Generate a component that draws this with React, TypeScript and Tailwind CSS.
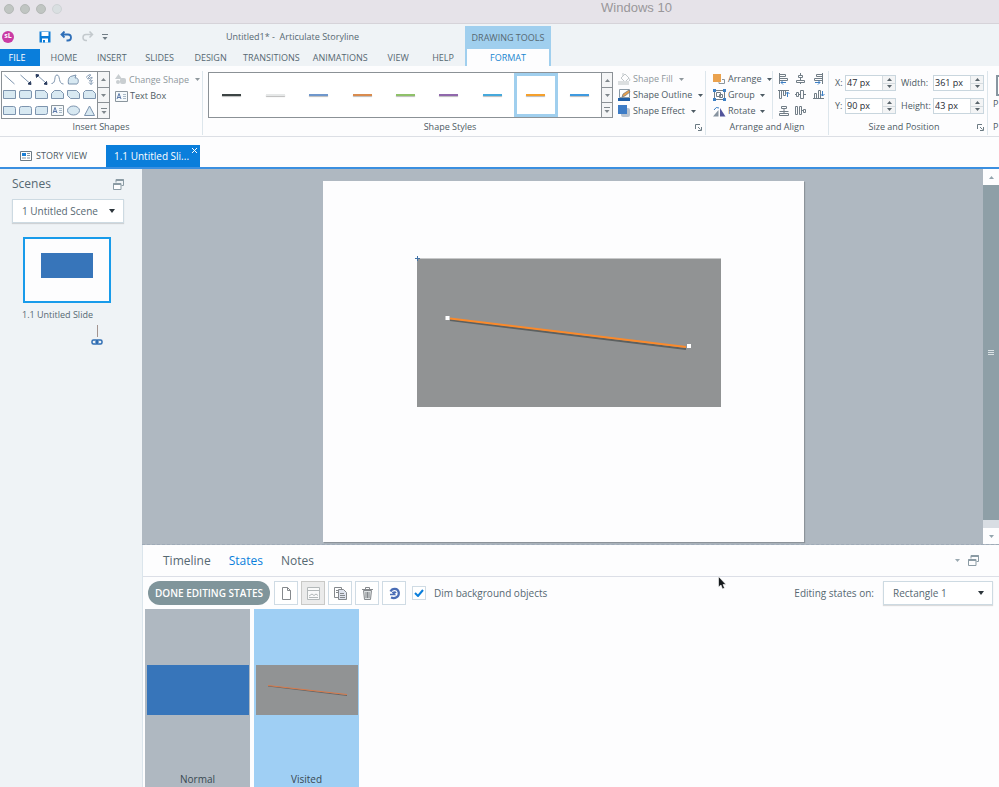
import type { ReactNode } from "react";

const outline = "#7d94ae";

function Caret({ className = "" }: { className?: string }) {
  return (
    <svg width="5" height="3" viewBox="0 0 5 3" className={`shrink-0 ${className}`} aria-hidden="true">
      <path d="M0 0h5L2.5 3z" fill="currentColor" />
    </svg>
  );
}

function CaretUp() {
  return (
    <svg width="5" height="3" viewBox="0 0 5 3" aria-hidden="true">
      <path d="M0 3h5L2.5 0z" fill="currentColor" />
    </svg>
  );
}

function MoreCaret() {
  return (
    <svg width="6" height="6" viewBox="0 0 6 6" aria-hidden="true">
      <path d="M0 .5h6" stroke="currentColor" />
      <path d="M.5 3h5L3 6z" fill="currentColor" />
    </svg>
  );
}

function WindowsIcon() {
  return (
    <svg width="11" height="11" viewBox="0 0 11 11" fill="none" stroke="#8b9ba4" aria-hidden="true">
      <path d="M3 3.5V.5h7.5v6H8.5" />
      <path d="M3 1h7.5" strokeWidth="2" />
      <path d="M.5 4.5h7.5v6H.5z" fill="#fdfdfe" />
      <path d="M.5 5h7.5" strokeWidth="2" />
    </svg>
  );
}

/* ---------- Title bar and ribbon tabs ---------- */

function TitleBar() {
  return (
    <div className="flex h-6 shrink-0 items-start border-b border-[#d6d3d9] bg-[#e6e3e9]">
      <div className="flex w-16 gap-[6px] pt-1 pl-1">
        <span className="size-[10px] rounded-full border border-[#b5b9b7] bg-[#c0c5c2]" />
        <span className="size-[10px] rounded-full border border-[#b5b9b7] bg-[#c0c5c2]" />
        <span className="size-[10px] rounded-full border border-[#b5b9b7] bg-[#c0c5c2]" />
        <span className="size-[10px] rounded-full border border-[#cfd3d6] bg-[#d9dfe1]" />
      </div>
      <h1 className="flex-1 pl-[210px] text-center font-['Liberation_Sans',Arial,sans-serif] text-[13px] leading-4 text-[#99979a]">
        Windows 10
      </h1>
    </div>
  );
}

const ribbonTabs = [
  { name: "HOME", width: "w-12" },
  { name: "INSERT", width: "w-12" },
  { name: "SLIDES", width: "w-12" },
  { name: "DESIGN", width: "w-[54px]" },
  { name: "TRANSITIONS", width: "w-[68px]" },
  { name: "ANIMATIONS", width: "w-[70px]" },
  { name: "VIEW", width: "w-[46px]" },
  { name: "HELP", width: "w-11" },
];

function Header() {
  return (
    <header className="flex h-[42px] shrink-0 bg-[#eff3f6] text-[#566872]">
      <div className="flex w-[465px] flex-col">
        <div className="flex h-[25px] items-center">
          <span className="ml-[2px] flex size-3 items-center justify-center rounded-full bg-[#c93ba4] text-[7px] font-bold text-white">
            sL
          </span>
          <button aria-label="Save" className="ml-[25px]">
            <svg width="12" height="12" viewBox="0 0 12 12" aria-hidden="true">
              <path d="M.5.5h11v11H.5z" fill="#0b7bd6" />
              <path d="M2.5 1h7v4h-7zM3 7.500h6v4H3z" fill="#fff" />
              <path d="M4 9h2v2.500H4z" fill="#0b7bd6" />
            </svg>
          </button>
          <button aria-label="Undo" className="ml-[9px]">
            <svg width="13" height="11" viewBox="0 0 13 11" fill="none" stroke="#2f6fb8" strokeWidth="1.800" aria-hidden="true">
              <path d="M4.500.5 1.500 3.500l3 3M2 3.500h6c4 0 4 6 0 6H6.500" />
            </svg>
          </button>
          <button aria-label="Redo" className="ml-2">
            <svg width="13" height="11" viewBox="0 0 13 11" fill="none" stroke="#c3c9cd" strokeWidth="1.500" aria-hidden="true">
              <path d="M8.500.5l3 3-3 3M11 3.500H5c-4 0-4 6 0 6h1" />
            </svg>
          </button>
          <button aria-label="Customize toolbar" className="ml-2 text-[#717d86]">
            <MoreCaret />
          </button>
          <p className="ml-[118px] text-[9px] whitespace-pre">Untitled1* -  Articulate Storyline</p>
        </div>
        <nav className="flex flex-1 text-[9px]">
          <button className="w-10 bg-[#0a7edb] pr-[6px] text-white">FILE</button>
          {ribbonTabs.map((t) => (
            <button key={t.name} className={`${t.width} text-center`}>
              {t.name}
            </button>
          ))}
        </nav>
      </div>
      <div className="mt-[2px] flex w-[86px] flex-col border-x-2 border-[#a0cfee] text-center text-[9px]">
        <span className="flex h-[23px] items-center justify-center bg-[#a0cfee] whitespace-nowrap">DRAWING TOOLS</span>
        <button className="flex-1 bg-[#fdfdfe] text-[#1a86d0]">FORMAT</button>
      </div>
    </header>
  );
}

/* ---------- Ribbon ---------- */

function Group({ title, className, launcher, children }: { title: string; className: string; launcher?: boolean; children: ReactNode }) {
  return (
    <section className={`relative flex flex-col border-r border-[#dde6ec] ${className}`}>
      <div className="flex h-12 flex-1">{children}</div>
      <h2 className={`h-4 text-center text-[9px] leading-4 whitespace-nowrap ${launcher ? "pr-2" : ""}`}>{title}</h2>
      {launcher && (
        <button aria-label={`${title} options`} className="absolute right-[3px] bottom-1">
          <svg width="7" height="7" viewBox="0 0 7 7" fill="none" stroke="#6b7a83" aria-hidden="true">
            <path d="M.5 5V.5H5M3 3l2.500 2.500M6.500 3v3.500H3" />
          </svg>
        </button>
      )}
    </section>
  );
}

function GalleryScroll({ name, width }: { name: string; width: string }) {
  return (
    <div className={`flex shrink-0 flex-col divide-y divide-[#8b9196] border-l border-[#8b9196] bg-[#f4f5f6] text-[#7f878c] ${width}`}>
      <button aria-label={`${name}: previous row`} className="flex flex-1 items-center justify-center">
        <CaretUp />
      </button>
      <button aria-label={`${name}: next row`} className="flex flex-1 items-center justify-center">
        <Caret />
      </button>
      <button aria-label={`${name}: more`} className="flex flex-1 items-center justify-center">
        <MoreCaret />
      </button>
    </div>
  );
}

function TextBoxGlyph() {
  return (
    <>
      <path d="M.5.5h12v10H.5z" fill="#f5f9fb" stroke="#8a959d" />
      <path d="M2 8l2-5.500L6 8M3 6.500h2" fill="none" stroke="#4b6ba0" strokeWidth=".9" />
      <path d="M8 3.500h3M8 5.500h3M8 7.500h3" fill="none" stroke="#9fb0c0" strokeWidth=".9" />
    </>
  );
}

const boxFill = "#d8e9f2";

const shapes: { name: string; art: ReactNode }[] = [
  { name: "Line", art: <path d="M1.500 1l10 9" stroke={outline} /> },
  {
    name: "Arrow",
    art: (
      <>
        <path d="M1.500 1l9 8" stroke={outline} />
        <path d="M12 10.500l-3-.5 2.500-2.500z" fill="#283a5c" stroke="#283a5c" />
      </>
    ),
  },
  {
    name: "Double arrow",
    art: (
      <>
        <path d="M2 1l9 8" stroke={outline} />
        <path d="M12 10.500l-3-.5 2.500-2.500zM1 .5l3 .5-2.500 2.500z" fill="#283a5c" stroke="#283a5c" />
      </>
    ),
  },
  { name: "Curve", art: <path d="M.5 9.500c5 0 2-8.500 5.500-8.500S7 10 12.500 10" fill="none" stroke={outline} /> },
  { name: "Freeform", art: <path d="M3.500 2.500L9 1 8 4c4-1 4 5 2 6H1.500C1 7 1 4 3.500 2.500z" fill={boxFill} stroke={outline} /> },
  { name: "Scribble", art: <path d="M3 3.500C6 0 9 0 7 2S4 5 5 5s5-3 4-1-4 3-2 3 3-1 2 0-1 2-1 3.500M6 8.500l2 2 2-2" fill="none" stroke={outline} /> },
  { name: "Rectangle", art: <path d="M.5 1.500h12v8H.5z" /> },
  { name: "Rounded rectangle", art: <rect x=".5" y="1.500" width="12" height="8" rx="1.500" /> },
  { name: "Snip single corner", art: <path d="M.5 1.500h9l3 3v5H.5z" /> },
  { name: "Snip same side corners", art: <path d="M3.500 1.500h6l3 3v5H.5v-5z" /> },
  { name: "Snip diagonal corners", art: <path d="M.5 1.500h9l3 3v5h-9l-3-3z" /> },
  { name: "Round single corner", art: <path d="M2.500 1.500h7l3 3v5H.5v-6z" /> },
  { name: "Round top corner", art: <path d="M.5 1.500h10q2 0 2 2v6H.5z" /> },
  { name: "Round top corners", art: <path d="M2.500 1.500h8q2 0 2 2v6H.5v-6q0-2 2-2z" /> },
  { name: "Round diagonal corners", art: <path d="M2.500 1.500h10v6q0 2-2 2H.5v-6q0-2 2-2z" /> },
  { name: "Text box shape", art: <TextBoxGlyph /> },
  { name: "Oval", art: <ellipse cx="6.500" cy="5.500" rx="6" ry="4.500" /> },
  { name: "Triangle", art: <path d="M6.500 1l5 9.500h-10z" /> },
];

function InsertShapes() {
  return (
    <Group title="Insert Shapes" className="w-[203px] shrink-0">
      <div className="ml-px flex w-[109px] shrink-0 border border-[#8b9196] bg-white">
        <div className="grid flex-1 grid-cols-6">
          {shapes.map((s) => (
            <button key={s.name} aria-label={s.name} className="flex items-center justify-center">
              <svg width="13" height="11" viewBox="0 0 13 11" fill={boxFill} stroke={outline} aria-hidden="true">
                {s.art}
              </svg>
            </button>
          ))}
        </div>
        <GalleryScroll name="Shapes" width="w-3" />
      </div>
      <div className="ml-[5px] flex flex-1 flex-col text-[9px]">
        <button className="flex h-[17px] items-center gap-[2px] whitespace-nowrap text-[#8f989d]">
          <svg width="12" height="11" viewBox="0 0 12 11" fill="#c9ced1" className="shrink-0" aria-hidden="true">
            <path d="M3.500 0L7 5H0z" />
            <rect x="5" y="4" width="6" height="6" rx="2" />
            <circle cx="3" cy="8" r="2" />
          </svg>
          Change Shape
          <Caret className="ml-1" />
        </button>
        <button className="flex h-4 items-center gap-[2px] whitespace-nowrap">
          <svg width="13" height="11" viewBox="0 0 13 11" className="shrink-0" aria-hidden="true">
            <TextBoxGlyph />
          </svg>
          Text Box
        </button>
      </div>
    </Group>
  );
}

const lineStyles = [
  { name: "Black", color: "bg-[#3c4444]" },
  { name: "White", color: "bg-[#e6e8e8]" },
  { name: "Steel blue", color: "bg-[#6f97cc]" },
  { name: "Copper", color: "bg-[#d98b4e]" },
  { name: "Green", color: "bg-[#8fc169]" },
  { name: "Purple", color: "bg-[#9068ac]" },
  { name: "Cyan", color: "bg-[#46a9dc]" },
  { name: "Orange", color: "bg-[#f5a02c]", selected: true },
  { name: "Blue", color: "bg-[#3f9ae0]" },
];

function ShapeStyles() {
  return (
    <Group title="Shape Styles" className="min-w-0 flex-1" launcher>
      <div className="mt-[1px] mb-[1px] ml-[5px] flex min-w-0 flex-1 border border-[#8b9196] bg-white">
        <div className="flex flex-1 pl-px">
          {lineStyles.map((s) => (
            <button
              key={s.name}
              aria-label={`${s.name} line`}
              className={`flex flex-1 items-center justify-center border-3 ${s.selected ? "border-[#a0cfee]" : "border-transparent"}`}
            >
              <span className={`h-[2px] w-[19px] shadow-[0_1px_1px_#0004] ${s.color}`} />
            </button>
          ))}
        </div>
        <GalleryScroll name="Shape styles" width="w-[11px]" />
      </div>
      <div className="flex w-[92px] shrink-0 flex-col pl-[5px] text-[9px]">
        <button className="flex h-4 items-center gap-[2px] whitespace-nowrap text-[#8f989d]">
          <svg width="13" height="12" viewBox="0 0 13 12" fill="none" stroke="#c2c8cb" className="shrink-0" aria-hidden="true">
            <path d="M3 5l4-4 4 4-4 4zM5 3V0M10 5q3 1 1.500 3" />
            <path d="M0 8h11v4H0z" fill="#dcdfe0" stroke="none" />
          </svg>
          Shape Fill
          <Caret className="ml-1" />
        </button>
        <button className="flex h-4 items-center gap-[2px] whitespace-nowrap">
          <svg width="13" height="12" viewBox="0 0 13 12" className="shrink-0" aria-hidden="true">
            <path d="M1.500.5h10v8h-10z" fill="#fff" stroke="#8b9aa6" />
            <path d="M4 8l1-3 6-4 1 2-5 4z" fill="#e7a04f" stroke="#596773" strokeWidth=".6" />
            <path d="M0 9h12v3H0z" fill="#1f5fa8" />
          </svg>
          Shape Outline
          <Caret className="ml-1" />
        </button>
        <button className="flex h-4 items-center gap-[2px] whitespace-nowrap">
          <svg width="13" height="12" viewBox="0 0 13 12" className="shrink-0" aria-hidden="true">
            <rect x="3" y="3" width="9" height="9" rx="2" fill="#b9c3cf" />
            <path d="M0 0h9v9H0z" fill="#3d7cc6" />
          </svg>
          Shape Effect
          <Caret className="ml-1" />
        </button>
      </div>
    </Group>
  );
}

const ink = "#717d86";
const accent = "#3c7fc4";

const alignTools: { name: string; art: ReactNode }[] = [
  {
    name: "Align left",
    art: (
      <>
        <path d="M1.500 0v11M1.500 1.500h6v2h-6M1.500 5.500h8v2h-8" />
        <path d="M8 9.500H3M5 7.500l-2 2 2 2" stroke={accent} />
      </>
    ),
  },
  { name: "Align center", art: <path d="M5.500 0v2M3.500 2.500h4v2h-4zM5.500 5v2M1.500 7.500h8v2h-8zM5.500 10v1" /> },
  {
    name: "Align right",
    art: (
      <>
        <path d="M9.500 0v11M9.500 1.500h-6v2h6M9.500 5.500h-8v2h8" />
        <path d="M2 9.500h5M5 7.500l2 2-2 2" stroke={accent} />
      </>
    ),
  },
  {
    name: "Align top",
    art: (
      <>
        <path d="M0 1.500h11M1.500 1.500v8h2v-8M5.500 1.500v5h2v-5" />
        <path d="M9.500 8V3M7.500 5l2-2 2 2" stroke={accent} />
      </>
    ),
  },
  { name: "Align middle", art: <path d="M0 5.500h1M1.500 3.500h2v4h-2zM4 5.500h1M5.500 1.500h3v8h-3zM9 5.500h2" /> },
  {
    name: "Align bottom",
    art: (
      <>
        <path d="M0 9.500h11M1.500 9.500v-5h2v5M5.500 9.500v-8h2v8" />
        <path d="M9.500 2v5M7.500 5l2 2 2-2" stroke={accent} />
      </>
    ),
  },
  { name: "Distribute vertically", art: <path d="M3.500 1.500h5v2h-5zM6 4v2M1.500 6.500h9M1.500 8.500h9v2h-9zM6 7v1" /> },
  { name: "Distribute horizontally", art: <path d="M.5 1.500h2v8h-2zM4.500 1.500h2v8h-2zM8.500 4.500h2v3h-2zM7 5.500h1" /> },
];

function ArrangeAndAlign() {
  return (
    <Group title="Arrange and Align" className="w-[123px] shrink-0">
      <div className="flex w-[67px] flex-col justify-between border-r border-[#dde6ec] pl-[7px] text-[9px]">
        <button className="flex h-4 items-center gap-[2px]">
          <svg width="13" height="12" viewBox="0 0 13 12" className="shrink-0" aria-hidden="true">
            <path d="M9 6.500h2.500v4H6V9" fill="none" stroke="#8b959c" />
            <path d="M0 1h8v8H0z" fill="#eaa24e" />
          </svg>
          Arrange
          <Caret className="ml-[3px]" />
        </button>
        <button className="flex h-4 items-center gap-[2px]">
          <svg width="13" height="12" viewBox="0 0 13 12" fill="none" stroke={ink} className="shrink-0" aria-hidden="true">
            <path d="M1.500 1.500h10v9h-10zM3.500 3.500h4v4h-4zM6.500 5.500h3v3h-3z" />
            <path d="M0 0h3v3H0zM10 0h3v3h-3zM0 9h3v3H0zM10 9h3v3h-3z" fill={accent} stroke="none" />
          </svg>
          Group
          <Caret className="ml-[3px]" />
        </button>
        <button className="flex h-4 items-center gap-[2px]">
          <svg width="13" height="11" viewBox="0 0 13 11" className="shrink-0" aria-hidden="true">
            <path d="M0 10.500L5.500 4v6.500z" fill="#8794a0" />
            <path d="M7 10.500V2l5.500 8.500z" fill="#52549b" />
            <path d="M1 4q2-4 5-2" fill="none" stroke={accent} />
          </svg>
          Rotate
          <Caret className="ml-[3px]" />
        </button>
      </div>
      <div className="grid flex-1 grid-cols-3 pl-[2px]">
        {alignTools.map((t) => (
          <button key={t.name} aria-label={t.name} className="flex items-center justify-center">
            <svg width="12" height="12" viewBox="0 0 12 12" fill="none" stroke={ink} aria-hidden="true">
              {t.art}
            </svg>
          </button>
        ))}
      </div>
    </Group>
  );
}

function Spinner({ id, label, value, labelWidth }: { id: string; label: string; value: string; labelWidth: string }) {
  return (
    <div className="flex h-4 items-center">
      <label htmlFor={id} className={`${labelWidth} text-[9px]`}>
        {label}
      </label>
      <div className="flex h-4 w-[51px] border border-[#c9d6de] bg-white">
        <input id={id} defaultValue={value} className="w-9 bg-transparent pl-px text-[9px] text-[#1f2a32] outline-none" />
        <div className="flex flex-1 flex-col divide-y divide-[#d5dbdf] border-l border-[#d5dbdf] bg-[#f3f4f5] text-[#59646b]">
          <button aria-label={`Increase ${label}`} className="flex flex-1 items-center justify-center">
            <CaretUp />
          </button>
          <button aria-label={`Decrease ${label}`} className="flex flex-1 items-center justify-center">
            <Caret />
          </button>
        </div>
      </div>
    </div>
  );
}

function SizeAndPosition() {
  return (
    <Group title="Size and Position" className="w-[159px] shrink-0" launcher>
      <div className="flex flex-1 gap-[5px] pt-1 pl-[6px]">
        <div className="flex flex-col gap-[7px]">
          <Spinner id="pos-x" label="X:" value="47 px" labelWidth="w-[10px]" />
          <Spinner id="pos-y" label="Y:" value="90 px" labelWidth="w-[10px]" />
        </div>
        <div className="flex flex-col gap-[7px]">
          <Spinner id="size-w" label="Width:" value="361 px" labelWidth="w-8" />
          <Spinner id="size-h" label="Height:" value="43 px" labelWidth="w-8" />
        </div>
      </div>
    </Group>
  );
}

function Ribbon() {
  return (
    <div className="flex h-[71px] shrink-0 overflow-hidden border-b border-[#dcdfe5] bg-[#fdfdfe] pt-[5px] pb-[1px] text-[#4d5b64]">
      <InsertShapes />
      <ShapeStyles />
      <ArrangeAndAlign />
      <SizeAndPosition />
      <div className="flex w-[11px] shrink-0 flex-col overflow-hidden pl-[5px] text-[9px]">
        <button className="flex flex-col items-start" aria-label="Player">
          <span className="mt-1 ml-[3px] h-[21px] w-5 border-2 border-[#8795a0] bg-white" />
          <span className="leading-4">P</span>
        </button>
        <span className="mt-auto leading-4">P</span>
      </div>
    </div>
  );
}

/* ---------- Document area ---------- */

function DocumentTabs() {
  return (
    <div className="flex h-8 shrink-0 items-end border-b-2 border-[#3a8fe0] bg-[#fdfdfe] text-[9px] text-[#4d5b64]">
      <button className="flex h-[22px] w-[106px] items-center gap-1 pl-5">
        <svg width="12" height="10" viewBox="0 0 12 10" aria-hidden="true">
          <path d="M.5.5h11v9H.5z" fill="#fff" stroke="#6d7a84" />
          <path d="M2 2h4v3H2z" fill="#1a7fd6" />
          <path d="M7 2.500h3M7 4.500h3M2 7h4M7 7h3" stroke="#8795a0" />
        </svg>
        STORY VIEW
      </button>
      <div className="relative flex h-[22px] w-[94px] items-center bg-[#0a7edb] text-white">
        <button className="pl-2 text-[10px]">1.1 Untitled Sli...</button>
        <button aria-label="Close tab" className="absolute top-[3px] right-[3px]">
          <svg width="5" height="5" viewBox="0 0 5 5" stroke="#fff" aria-hidden="true">
            <path d="M0 0l5 5M5 0L0 5" />
          </svg>
        </button>
      </div>
    </div>
  );
}

function Sidebar() {
  return (
    <aside className="w-[142px] shrink-0 bg-[#eff3f6] pl-3 text-[#566872]">
      <div className="flex h-[30px] w-28 items-center justify-between">
        <h2 className="text-[12px]">Scenes</h2>
        <button aria-label="Undock scenes">
          <WindowsIcon />
        </button>
      </div>
      <div className="relative w-28 text-[10px]">
        <select aria-label="Scene" className="h-6 w-full appearance-none border border-[#cddae2] bg-white pl-[9px] text-[10px] shadow-[0_1px_1px_#0002]">
          <option>1 Untitled Scene</option>
        </select>
        <svg width="6" height="4" viewBox="0 0 6 4" className="pointer-events-none absolute top-[10px] right-[9px]" aria-hidden="true">
          <path d="M0 0h6L3 4z" fill="#2c353b" />
        </svg>
      </div>
      <button className="mt-[14px] ml-[11px] flex h-[66px] w-[88px] justify-center border-2 border-[#189bea] bg-[#fdfdfe] pt-[14px]" aria-label="Slide 1.1 thumbnail">
        <span className="h-[25px] w-[52px] bg-[#3775ba]" />
      </button>
      <p className="mt-1 ml-[10px] text-[9px] leading-4">1.1 Untitled Slide</p>
      <svg width="12" height="24" viewBox="0 0 12 24" fill="none" className="ml-[79px]" aria-hidden="true">
        <path d="M6.500 2v12" stroke="#a3938f" />
        <rect x="1" y="17" width="5.500" height="4" rx="1.500" stroke="#2f6db3" strokeWidth="1.500" />
        <rect x="5.500" y="17" width="5.500" height="4" rx="1.500" stroke="#2f6db3" strokeWidth="1.500" />
        <path d="M4 19h4" stroke="#2f6db3" />
      </svg>
    </aside>
  );
}

function Canvas() {
  return (
    <div className="flex h-[376px] shrink-0 border-b border-dashed border-[#9fabb8] bg-[#afb8c1]">
      <div className="flex flex-1 justify-center pt-3 pl-[2px]">
        <div className="relative h-[361px] w-[481px] bg-[#fdfdfe] shadow-[1px_1px_1px_#0003]">
          <svg width="481" height="361" viewBox="0 0 481 361" className="block" role="img" aria-label="Slide with a rectangle and a line">
            <path d="M94 77.500h304v148.500H94z" fill="#919394" />
            <path d="M127 139l236 29" stroke="#5c6060" strokeWidth="2" />
            <path d="M127 137.500l236 28.500" stroke="#fb8a2b" strokeWidth="2.200" />
            <path d="M122.500 135h4v4h-4zM364 163h4v4h-4z" fill="#fff" />
            <path d="M94.500 75v5M92 77.500h5" stroke="#4374a8" />
          </svg>
        </div>
      </div>
      <div className="flex w-4 shrink-0 flex-col bg-[#d8dde3] text-[#93a4ad]">
        <button aria-label="Scroll up" className="flex h-4 items-center justify-center bg-[#fdfdfe]">
          <CaretUp />
        </button>
        <div className="flex flex-1 flex-col items-center justify-center gap-px bg-[#8e9fa7]">
          <span className="h-px w-[6px] bg-[#dbe2e5]" />
          <span className="h-px w-[6px] bg-[#dbe2e5]" />
          <span className="h-px w-[6px] bg-[#dbe2e5]" />
        </div>
        <button aria-label="Scroll down" className="mt-2 flex h-4 items-center justify-center bg-[#fdfdfe]">
          <Caret />
        </button>
      </div>
    </div>
  );
}

/* ---------- States panel ---------- */

const stateTools: { name: string; active?: boolean; art: ReactNode }[] = [
  { name: "New state", art: <path d="M2.500.5h5l3 3v9h-8zM7.500.5v3h3" fill="#fff" /> },
  {
    name: "Edit state image",
    active: true,
    art: (
      <g stroke="#b3b8b9">
        <path d="M.5.5h12v12H.5zM.5 3.500h12" fill="#fafafa" />
        <path d="M2 9l3-2 2 1.500L9 7l2 1.500M2 10.500h9" />
      </g>
    ),
  },
  {
    name: "Duplicate state",
    art: (
      <>
        <path d="M.5.5h7v10h-7zM2 3.500h3M2 5.500h3" fill="#fff" />
        <path d="M4.500 2.500h5l3 3v7h-8z" fill="#dfe4ef" />
        <path d="M6 6.500h4M6 8.500h5M6 10.500h5" />
      </>
    ),
  },
  {
    name: "Delete state",
    art: (
      <>
        <path d="M1 2.500h11M4.500 2V.5h4V2" />
        <path d="M2.500 3.500h8l-1 9h-6zM5 5v6M6.500 5v6M8 5v6" fill="#dfe3e4" />
      </>
    ),
  },
  {
    name: "Reset to original state",
    art: (
      <>
        <path d="M2.500 4.500C4 1 10 .5 10.800 5.500 11.200 10 7 12 3 10.500" stroke="#4a6db5" strokeWidth="2.200" />
        <path d="M2 7.500h4.500L5 5.500q2-1 3 .5" stroke="#4a6db5" strokeWidth="1.600" />
      </>
    ),
  },
];

function StatesPanel() {
  return (
    <section className="flex flex-1 flex-col border-l border-[#dbe5ec] bg-[#fdfdfe] text-[#566872]">
      <div className="flex h-8 shrink-0 items-center border-b border-[#dcdfe7] px-5 text-[12px]">
        <nav className="flex flex-1 gap-[18px]">
          <button>Timeline</button>
          <button className="text-[#0a7edb]">States</button>
          <button>Notes</button>
        </nav>
        <button aria-label="Collapse panel" className="text-[#9aa9b1]">
          <Caret />
        </button>
        <button aria-label="Undock panel" className="ml-2">
          <WindowsIcon />
        </button>
      </div>
      <div className="flex h-8 shrink-0 items-center pr-[6px] pl-[5px] text-[10px]">
        <button className="h-6 w-[122px] rounded-full bg-[#80959b] font-semibold whitespace-nowrap text-white">DONE EDITING STATES</button>
        <div className="ml-1 flex gap-[3px]">
          {stateTools.map((t) => (
            <button
              key={t.name}
              aria-label={t.name}
              className={`flex size-6 items-center justify-center border ${t.active ? "border-[#c9c9c7] bg-[#ebebeb]" : "border-[#cfdbe4] bg-white"}`}
            >
              <svg width="13" height="13" viewBox="0 0 13 13" fill="none" stroke="#85898d" aria-hidden="true">
                {t.art}
              </svg>
            </button>
          ))}
        </div>
        <label className="ml-[6px] flex items-center gap-2">
          <span className="relative flex size-[14px]">
            <input type="checkbox" defaultChecked className="size-[14px] appearance-none border border-[#cfdbe4] bg-white" />
            <svg width="10" height="8" viewBox="0 0 10 8" fill="none" className="pointer-events-none absolute top-[3px] left-[2px]" aria-hidden="true">
              <path d="M1 4l3 3 5-6" stroke="#0a7edb" strokeWidth="2" />
            </svg>
          </span>
          Dim background objects
        </label>
        <label htmlFor="edit-on" className="ml-auto">
          Editing states on:
        </label>
        <div className="relative ml-[9px] w-[110px]">
          <select id="edit-on" className="block h-6 w-full appearance-none border border-[#cddae2] bg-white pl-[9px] text-[10px] shadow-[0_1px_1px_#0002]">
            <option>Rectangle 1</option>
          </select>
          <svg width="6" height="4" viewBox="0 0 6 4" className="pointer-events-none absolute top-[10px] right-[9px]" aria-hidden="true">
            <path d="M0 0h6L3 4z" fill="#2c353b" />
          </svg>
        </div>
      </div>
      <div className="flex flex-1 gap-1 pl-[2px] text-[10px] text-[#394851]">
        <button className="flex w-[105px] flex-col items-center bg-[#afb8c1] pt-14">
          <span className="block h-[50px] w-[102px] bg-[#3775ba]" />
          <span className="mt-auto leading-4">Normal</span>
        </button>
        <button className="flex w-[105px] flex-col items-center bg-[#9fcff4] pt-14">
          <svg width="102" height="50" viewBox="0 0 102 50" aria-hidden="true">
            <path d="M0 0h102v50H0z" fill="#919394" />
            <path d="M12 21l79 9.500" stroke="#666" />
            <path d="M12 20.500l79 9" stroke="#d97a4a" />
          </svg>
          <span className="mt-auto leading-4">Visited</span>
        </button>
      </div>
    </section>
  );
}

export default function App() {
  return (
    <div className="relative flex h-screen flex-col overflow-hidden bg-[#fdfdfe] font-['Open_Sans','Noto_Sans',sans-serif]">
      <TitleBar />
      <Header />
      <Ribbon />
      <DocumentTabs />
      <div className="flex min-h-0 flex-1">
        <Sidebar />
        <main className="flex min-w-0 flex-1 flex-col">
          <Canvas />
          <StatesPanel />
        </main>
      </div>
      <svg width="9" height="14" viewBox="0 0 9 14" className="pointer-events-none absolute top-[576px] left-[718px]" aria-hidden="true">
        <path d="M.5.5v10.500l2.500-2 1.500 4 2-1-1.500-3.500h3z" fill="#15191c" stroke="#fff" strokeWidth=".6" />
      </svg>
    </div>
  );
}
